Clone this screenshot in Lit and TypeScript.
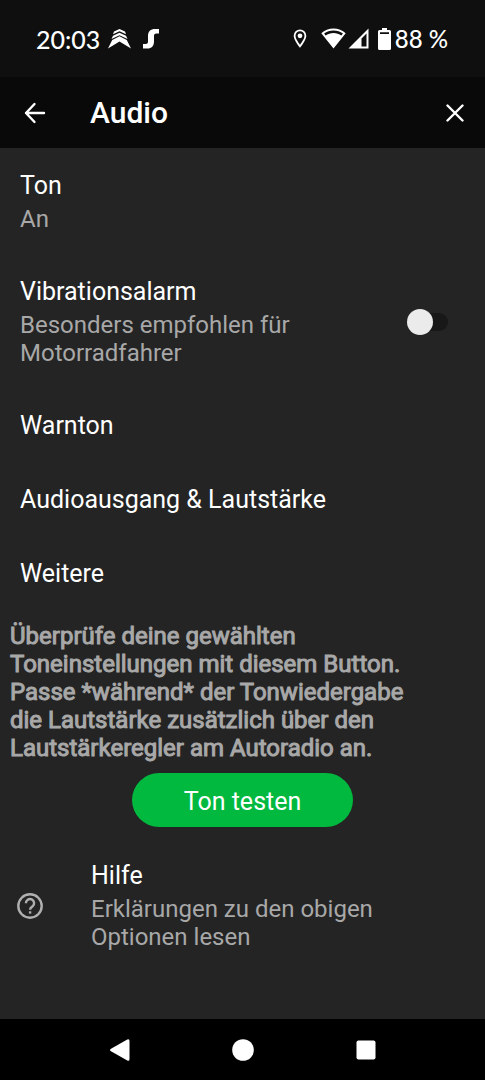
import { LitElement, html, css, svg, nothing, type TemplateResult } from "lit";
import { customElement, property, state } from "lit/decorators.js";

@customElement("status-bar")
class StatusBar extends LitElement {
  static styles = css`
    :host {
      display: flex;
      justify-content: space-between;
      align-items: center;
      height: 77px;
      padding: 0 37px 0 36px;
      box-sizing: border-box;
      background: #0f0f0f;
      color: #fff;
      font: 500 24px/28px Lato, "Noto Sans", sans-serif;
    }
    .group {
      display: flex;
      align-items: center;
      white-space: nowrap;
    }
    .clock {
      font-size: 25px;
    }
    svg {
      display: block;
      fill: currentColor;
    }
    .chevrons {
      margin-left: 8px;
    }
    .swoosh {
      margin-left: 12px;
    }
    .wifi {
      margin-left: 14px;
    }
    .signal {
      margin-left: 2px;
    }
    .battery {
      margin: 0 4px 0 9px;
    }
  `;

  render() {
    return html`
      <div class="group">
        <span class="clock">20:03</span>
        <svg class="chevrons" width="23" height="20" viewBox="0 0 23 20" aria-hidden="true">
          <path d="M5 5.2 6 2.6 11.5 0 17 2.6 18 5.2 11.5 2.3Z" />
          <path d="M3.5 10 5 6.7 11.5 3.7 18 6.7 19.500 10 11.500 6.200Z" />
          <path d="M0 19.500 4.200 11 11.500 7.200 18.800 11 23 19.500 11.500 12.500Z" />
        </svg>
        <svg class="swoosh" width="16" height="20" viewBox="0 0 16 20" aria-hidden="true">
          <path d="M16 0V4.500H13.500C11.500 4.500 11 5.500 11 7V12.500C11 17 8.500 19.500 4.500 19.500H0V15H2.500C4.600 15 5 14 5 12.500V7C5 2.500 7.500 0 12 0Z" />
        </svg>
      </div>
      <div class="group">
        <svg width="14" height="20" viewBox="0 0 14 20" aria-hidden="true">
          <path
            fill-rule="evenodd"
            d="M7 .5A6.300 6.300 0 0 0 .7 6.800C.7 11.300 7 18.800 7 18.800S13.300 11.300 13.300 6.800A6.300 6.300 0 0 0 7 .5ZM7 2.300A4.500 4.500 0 0 1 11.500 6.800C11.500 9.400 8.700 13.500 7 15.800 5.300 13.500 2.500 9.400 2.500 6.800A4.500 4.500 0 0 1 7 2.300Z"
          />
          <circle cx="7" cy="6.800" r="2.400" />
        </svg>
        <svg class="wifi" width="25" height="21" viewBox="0 0 25 21" aria-hidden="true">
          <path
            fill-rule="evenodd"
            d="M12.500 .5C7.800 .5 3.500 2.300 .3 5.200L12.500 20.500 24.700 5.200C21.500 2.300 17.200 .5 12.500 .5ZM12.500 2.600C16 2.600 19.300 3.700 21.900 5.600L20.400 7.400C18.100 5.900 15.400 5 12.500 5 9.600 5 6.900 5.900 4.600 7.400L3.100 5.600C5.700 3.700 9 2.600 12.500 2.600Z"
          />
        </svg>
        <svg class="signal" width="21" height="21" viewBox="0 0 21 21" aria-hidden="true">
          <path fill-rule="evenodd" d="M20.500 .5V20.500H.5ZM18.500 5.500 13.500 10.500V18.500H18.500Z" />
        </svg>
        <svg class="battery" width="13" height="22" viewBox="0 0 13 22" aria-hidden="true">
          <path
            fill-rule="evenodd"
            d="M4 0H9V2H11.500A1.500 1.500 0 0 1 13 3.500V20.500A1.500 1.500 0 0 1 11.500 22H1.500A1.500 1.500 0 0 1 0 20.500V3.500A1.500 1.500 0 0 1 1.500 2H4ZM2 4.300V6H11V4.300Z"
          />
        </svg>
        <span>88 %</span>
      </div>
    `;
  }
}

@customElement("app-header")
class AppHeader extends LitElement {
  @property() heading = "";

  static styles = css`
    :host {
      display: block;
      background: #090909;
      color: #fff;
    }
    header {
      display: flex;
      align-items: center;
      height: 71px;
      padding: 0 8px 0 13px;
      box-sizing: border-box;
    }
    button {
      display: grid;
      place-items: center;
      width: 44px;
      height: 44px;
      padding: 0;
      border: 0;
      background: none;
      color: inherit;
    }
    h1 {
      flex: 1;
      margin: 0;
      padding-left: 33px;
      font: 500 30px/35px Roboto, sans-serif;
    }
    svg {
      fill: none;
      stroke: currentColor;
      stroke-width: 2.4;
      stroke-linecap: round;
      stroke-linejoin: round;
    }
  `;

  render() {
    return html`
      <header>
        <button aria-label="Zurück">
          <svg width="22" height="22" viewBox="0 0 22 22"><path d="M20 11H2M10.500 2 2 11 10.500 20" /></svg>
        </button>
        <h1>${this.heading}</h1>
        <button aria-label="Schließen">
          <svg width="18" height="18" viewBox="0 0 18 18"><path d="M1.500 1.500 16.500 16.500M16.500 1.500 1.500 16.500" /></svg>
        </button>
      </header>
    `;
  }
}

interface Setting {
  id: string;
  title: string;
  summary?: string;
  toggle?: boolean;
  icon?: TemplateResult;
}

const helpIcon = html`
  <svg class="icon" width="26" height="26" viewBox="0 0 26 26" aria-hidden="true">
    ${svg`
      <circle cx="13" cy="13" r="11.700" />
      <path d="M8.900 10.200A4.100 4.100 0 1 1 15.600 13.300C14 14.500 13.100 14.900 13.100 16.700" />
      <path d="M13.100 18.300V20.600" />
    `}
  </svg>
`;

const settings: Setting[] = [
  { id: "ton", title: "Ton", summary: "An" },
  { id: "vibration", title: "Vibrationsalarm", summary: "Besonders empfohlen für Motorradfahrer", toggle: true },
  { id: "warnton", title: "Warnton" },
  { id: "ausgang", title: "Audioausgang & Lautstärke" },
  { id: "weitere", title: "Weitere" },
];

const help: Setting = {
  id: "hilfe",
  title: "Hilfe",
  summary: "Erklärungen zu den obigen Optionen lesen",
  icon: helpIcon,
};

@customElement("app-root")
class AppRoot extends LitElement {
  @state() private vibration = false;

  static styles = css`
    :host {
      display: flex;
      flex-direction: column;
      min-height: 100vh;
      background: #242424;
      color: #fff;
      font: 400 25px/30px Roboto, sans-serif;
    }
    main {
      flex: 1;
      padding-top: 1px;
    }
    .row {
      display: flex;
      align-items: center;
      width: 100%;
      box-sizing: border-box;
      padding: 22px 37px 22px 20px;
      border: 0;
      background: none;
      color: inherit;
      font: inherit;
      text-align: left;
    }
    .row.help {
      padding-left: 17px;
    }
    .text {
      flex: 1;
      display: flex;
      flex-direction: column;
      gap: 4px;
    }
    .icon + .text {
      padding-left: 48px;
    }
    .summary {
      max-width: 300px;
      color: #a8a8a8;
      font-size: 24px;
      line-height: 28px;
    }
    .icon {
      flex: none;
      fill: none;
      stroke: #b0b0b0;
      stroke-width: 2.4;
    }
    .switch {
      flex: none;
      display: flex;
      align-items: center;
      appearance: none;
      width: 41px;
      height: 18px;
      margin: 0;
      border-radius: 9px;
      background: #181818;
    }
    .switch::before {
      content: "";
      flex: none;
      width: 26px;
      height: 26px;
      border-radius: 50%;
      background: #ebebeb;
    }
    .switch:checked {
      justify-content: flex-end;
      background: #00632a;
    }
    .note {
      max-width: 410px;
      margin: 0;
      padding: 11px 10px;
      color: #a8a8a8;
      font-size: 24px;
      line-height: 28px;
      -webkit-text-stroke: 1px currentColor;
    }
    .test {
      display: block;
      width: 221px;
      height: 54px;
      margin: 0 auto 12px;
      padding: 3px 0 0;
      border: 0;
      border-radius: 27px;
      background: #00b93e;
      color: #fff;
      font: inherit;
    }
    nav {
      display: flex;
      justify-content: center;
      gap: 79px;
      padding: 8px 0;
      background: #000;
    }
    nav button {
      display: grid;
      place-items: center;
      width: 44px;
      height: 45px;
      padding: 0;
      border: 0;
      background: none;
    }
    nav svg {
      fill: #fff;
    }
  `;

  private texts(s: Setting) {
    return html`
      <span class="text">
        <span>${s.title}</span>
        ${s.summary ? html`<span class="summary">${s.summary}</span>` : nothing}
      </span>
    `;
  }

  private row(s: Setting) {
    if (s.toggle) {
      return html`
        <label class="row" for=${s.id}>
          ${this.texts(s)}
          <input
            class="switch"
            type="checkbox"
            role="switch"
            id=${s.id}
            .checked=${this.vibration}
            @change=${(e: Event) => (this.vibration = (e.target as HTMLInputElement).checked)}
          />
        </label>
      `;
    }
    return html`<button class="row ${s.icon ? "help" : ""}" id=${s.id}>${s.icon ?? nothing}${this.texts(s)}</button>`;
  }

  render() {
    return html`
      <status-bar></status-bar>
      <app-header heading="Audio"></app-header>
      <main>
        ${settings.map((s) => this.row(s))}
        <p class="note">
          Überprüfe deine gewählten Toneinstellungen mit diesem Button. Passe *während* der Tonwiedergabe die
          Lautstärke zusätzlich über den Lautstärkeregler am Autoradio an.
        </p>
        <button class="test">Ton testen</button>
        ${this.row(help)}
      </main>
      <nav>
        <button aria-label="Zurück">
          <svg width="20" height="22" viewBox="0 0 20 22">
            <path d="M17.300 .4 1 9.700Q-1 11 1 12.300L17.300 21.600Q19.500 22.500 19.500 20V2Q19.500-.5 17.300 .4Z" />
          </svg>
        </button>
        <button aria-label="Startseite">
          <svg width="22" height="22" viewBox="0 0 22 22"><circle cx="11" cy="11" r="10.800" /></svg>
        </button>
        <button aria-label="Übersicht">
          <svg width="20" height="20" viewBox="0 0 20 20"><rect x=".5" y=".5" width="19" height="19" rx="2" /></svg>
        </button>
      </nav>
    `;
  }
}
